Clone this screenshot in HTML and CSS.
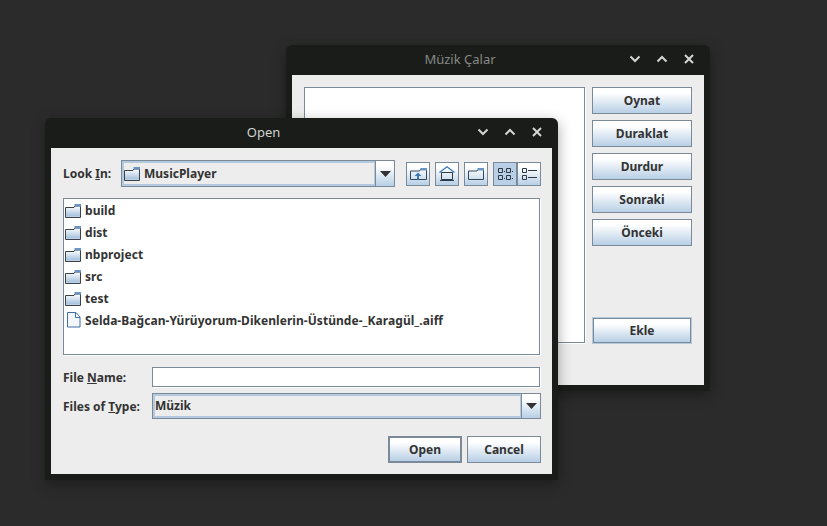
FILE: index.html
```html
<!DOCTYPE html>
<html lang="en">
<head>
    <meta charset="UTF-8">
    <meta name="viewport" content="width=device-width, initial-scale=1.0">
    <title>Müzik Çalar</title>
    <link rel="stylesheet" href="styles.css">
</head>
<body>

    <svg class="defs" width="0" height="0">
        <defs>
            <linearGradient id="folderFill" x1="0" y1="0" x2="0" y2="1">
                <stop offset="0" stop-color="#ffffff"/>
                <stop offset="0.85" stop-color="#a9c4df"/>
                <stop offset="1" stop-color="#d5e2ef"/>
            </linearGradient>
        </defs>
        <symbol id="folder" viewBox="0 0 16 14">
            <path d="M.5 13.500v-10h8.500l1-1.500h5.500v11.500z" fill="url(#folderFill)" stroke="#3c4248"/>
            <path d="M9.500 0h6.500v2.500h-6.500z" fill="#6a94c4"/>
        </symbol>
        <symbol id="caret" viewBox="0 0 11 6">
            <path d="M0 0h11L5.500 6z" fill="#333"/>
        </symbol>
        <symbol id="chevDown" viewBox="0 0 12 8">
            <path d="M1.500 1.500 6 6l4.500-4.500" fill="none" stroke="#d4d6d3" stroke-width="2"/>
        </symbol>
        <symbol id="chevUp" viewBox="0 0 12 8">
            <path d="M1.500 6.500 6 2l4.500 4.500" fill="none" stroke="#d4d6d3" stroke-width="2"/>
        </symbol>
        <symbol id="cross" viewBox="0 0 10 10">
            <path d="M1 1l8 8M9 1l-8 8" fill="none" stroke="#d4d6d3" stroke-width="2"/>
        </symbol>
    </svg>

    <div class="window music">
        <div class="titlebar">
            <span class="title dim">Müzik Çalar</span>
            <div class="controls">
                <svg width="12" height="8"><use href="#chevDown"/></svg>
                <svg width="12" height="8"><use href="#chevUp"/></svg>
                <svg width="10" height="10"><use href="#cross"/></svg>
            </div>
        </div>
        <div class="music-body">
            <div class="playlist"></div>
            <div class="side-buttons">
                <button class="btn">Oynat</button>
                <button class="btn">Duraklat</button>
                <button class="btn">Durdur</button>
                <button class="btn">Sonraki</button>
                <button class="btn">Önceki</button>
                <button class="btn add">Ekle</button>
            </div>
        </div>
    </div>

    <div class="window open">
        <div class="titlebar">
            <span class="title">Open</span>
            <div class="controls">
                <svg width="12" height="8"><use href="#chevDown"/></svg>
                <svg width="12" height="8"><use href="#chevUp"/></svg>
                <svg width="10" height="10"><use href="#cross"/></svg>
            </div>
        </div>
        <div class="open-body">
            <div class="lookin-row">
                <label class="lookin-label">Look <u>I</u>n:</label>
                <div class="combo lookin-combo">
                    <div class="combo-value">
                        <svg width="16" height="14"><use href="#folder"/></svg>
                        <span>MusicPlayer</span>
                    </div>
                    <div class="combo-arrow"><svg width="11" height="6"><use href="#caret"/></svg></div>
                </div>
                <div class="tools">
                    <button class="tool">
                        <svg width="17" height="12" viewBox="0 0 17 12">
                            <path d="M.5 11.500v-8.500h9l1-1.500h6v10z" fill="none" stroke="#34465a"/>
                            <path d="M10.500 0h6.500v2.500h-6.500z" fill="#6a94c4"/>
                            <path d="M8 4.500 4.500 8H7v3.500h2V8h2.500z" fill="#3f78b5"/>
                        </svg>
                    </button>
                    <button class="tool">
                        <svg width="16" height="15" viewBox="0 0 16 15">
                            <path d="M.5 6.500 8 .8l7.500 5.700" fill="none" stroke="#3f78b5" stroke-width="1.300"/>
                            <path d="M2.500 6.500h11v7h-11z" fill="none" stroke="#2c3a48"/>
                            <path d="M1 14.500h14" stroke="#2c3a48"/>
                        </svg>
                    </button>
                    <button class="tool">
                        <svg width="16" height="12" viewBox="0 0 16 12">
                            <path d="M.5 11.500v-8.500h8.500l1-1.500h5.500v10z" fill="none" stroke="#34465a"/>
                            <path d="M9.500 0h6.500v2.500h-6.500z" fill="#6a94c4"/>
                        </svg>
                    </button>
                    <div class="tool-pair">
                        <button class="tool active">
                            <svg width="15" height="12" viewBox="0 0 15 12">
                                <path d="M.5.500h4v4h-4zM8.500.500h4v4h-4zM.5 7.500h4v4h-4zM8.500 7.500h4v4h-4z" fill="none" stroke="#2c3a48"/>
                                <path d="M6 3h1v1H6zM14 3h1v1h-1zM6 10h1v1H6zM14 10h1v1h-1z" fill="#2c3a48"/>
                            </svg>
                        </button>
                        <button class="tool">
                            <svg width="15" height="12" viewBox="0 0 15 12">
                                <path d="M.5.500h4v4h-4zM.5 7.500h4v4h-4z" fill="none" stroke="#2c3a48"/>
                                <path d="M6 2.500h9M6 9.500h9" stroke="#2c3a48"/>
                            </svg>
                        </button>
                    </div>
                </div>
            </div>

            <div class="file-list">
                <div class="file-row"><svg class="folder-icon" width="16" height="14"><use href="#folder"/></svg><span>build</span></div>
                <div class="file-row"><svg class="folder-icon" width="16" height="14"><use href="#folder"/></svg><span>dist</span></div>
                <div class="file-row"><svg class="folder-icon" width="16" height="14"><use href="#folder"/></svg><span>nbproject</span></div>
                <div class="file-row"><svg class="folder-icon" width="16" height="14"><use href="#folder"/></svg><span>src</span></div>
                <div class="file-row"><svg class="folder-icon" width="16" height="14"><use href="#folder"/></svg><span>test</span></div>
                <div class="file-row">
                    <svg width="16" height="16" viewBox="0 0 16 16">
                        <path d="M2.500.500h8.500l4 4.500v10h-12.500z" fill="#f3f7fb" stroke="#3f6fa5"/>
                        <path d="M10.500.500v5h4.500" fill="none" stroke="#3f6fa5"/>
                    </svg>
                    <span>Selda-Bağcan-Yürüyorum-Dikenlerin-Üstünde-_Karagül_.aiff</span>
                </div>
            </div>

            <div class="name-row">
                <label class="field-label">File <u>N</u>ame:</label>
                <input type="text" class="name-input">
            </div>
            <div class="type-row">
                <label class="field-label">Files of <u>T</u>ype:</label>
                <div class="combo type-combo">
                    <div class="combo-value"><span>Müzik</span></div>
                    <div class="combo-arrow"><svg width="11" height="6"><use href="#caret"/></svg></div>
                </div>
            </div>

            <div class="dialog-buttons">
                <button class="btn default">Open</button>
                <button class="btn">Cancel</button>
            </div>
        </div>
    </div>

</body>
</html>
```

FILE: styles.css
```css
* {
    box-sizing: border-box;
}
html, body {
    margin: 0;
    height: 100%;
}
body {
    position: relative;
    overflow: hidden;
    background-color: #2b2b2b;
    font-family: "Noto Sans", sans-serif;
    font-size: 12px;
    font-weight: 700;
    color: #333;
}
.defs {
    position: absolute;
}

/* windows */
.window {
    position: absolute;
    display: flex;
    flex-direction: column;
    background-color: #1a1c19;
    border-radius: 6px 6px 0 0;
    padding: 0 6px 6px;
    box-shadow: 0 4px 14px rgba(0, 0, 0, 0.35);
}
.music {
    left: 286px;
    top: 45px;
    width: 424px;
    height: 346px;
}
.open {
    left: 45px;
    top: 118px;
    width: 513px;
    height: 362px;
}
.titlebar {
    position: relative;
    flex: none;
    height: 30px;
    padding: 0 76px 2px 0;
    display: flex;
    align-items: center;
    justify-content: center;
}
.title {
    font-size: 13px;
    font-weight: 400;
    color: #d0d3cf;
}
.title.dim {
    color: #868886;
}
.controls {
    position: absolute;
    right: 10px;
    top: 0;
    height: 28px;
    display: flex;
    align-items: center;
    gap: 15px;
}
.controls svg:last-child {
    margin-left: 1px;
}

/* buttons */
.btn {
    height: 27px;
    padding: 0;
    border: 1px solid #7a8a99;
    background: linear-gradient(#ffffff 20%, #b8cfe5);
    font: inherit;
    color: #333;
}
.btn.default {
    border-width: 2px;
}
.btn.add {
    border: 2px solid #7a8a99;
    outline: 1px solid #b4c8de;
    outline-offset: -1px;
    margin-top: auto;
}

/* music window */
.music-body {
    flex: 1;
    display: flex;
    gap: 7px;
    padding: 12px 12px 41px;
    background-color: #ededed;
}
.playlist {
    flex: 1;
    height: 256px;
    background-color: #fff;
    border: 1px solid #7a8a99;
    box-shadow: 1px 1px 0 #fff;
}
.side-buttons {
    flex: none;
    width: 100px;
    display: flex;
    flex-direction: column;
    gap: 6px;
}

/* open dialog */
.open-body {
    flex: 1;
    display: flex;
    flex-direction: column;
    padding: 12px 11px 11px 12px;
    background-color: #ededed;
}
.lookin-row {
    display: flex;
    align-items: center;
    height: 27px;
}
.lookin-label {
    width: 58px;
}
.combo {
    display: flex;
    height: 100%;
    border: 1px solid #7a8a99;
    background-color: #ededed;
}
.lookin-combo {
    width: 274px;
}
.combo-value {
    flex: 1;
    display: flex;
    align-items: center;
    gap: 4px;
    padding-left: 0;
    border: 2px solid #b4c8de;
    border-right-width: 1px;
}
.combo-arrow {
    flex: none;
    width: 19px;
    display: flex;
    align-items: center;
    justify-content: center;
    border-left: 1px solid #7a8a99;
    background: linear-gradient(#ffffff 20%, #b8cfe5);
}
.tools {
    display: flex;
    gap: 5px;
    margin-left: 11px;
}
.tool {
    width: 24px;
    height: 24px;
    padding: 0;
    display: flex;
    align-items: center;
    justify-content: center;
    border: 1px solid #7a8a99;
    background: linear-gradient(#ffffff 20%, #b8cfe5);
}
.tool.active {
    background: #b8cfe5;
}
.tool-pair {
    display: flex;
}
.file-list {
    height: 157px;
    margin: 11px 1px 0 0;
    background-color: #fff;
    border: 1px solid #7a8a99;
    box-shadow: 1px 1px 0 #fff;
}
.file-row {
    display: flex;
    align-items: center;
    gap: 4px;
    height: 22px;
    padding-left: 1px;
    letter-spacing: 0.05px;
}
.file-row svg {
    flex: none;
}
.folder-icon {
    margin-top: 2px;
}
.name-row {
    display: flex;
    align-items: center;
    height: 20px;
    margin: 12px 1px 0 0;
}
.field-label {
    width: 89px;
    flex: none;
}
.name-input {
    flex: 1;
    height: 20px;
    padding: 0;
    background-color: #fff;
    border: 1px solid #7a8a99;
    box-shadow: 1px 1px 0 #fff;
}
.type-row {
    display: flex;
    align-items: center;
    height: 26px;
    margin-top: 6px;
}
.type-combo {
    flex: 1;
}
.type-combo .combo-value {
    padding-bottom: 2px;
}
.dialog-buttons {
    display: flex;
    justify-content: flex-end;
    gap: 5px;
    margin-top: 17px;
}
.dialog-buttons .btn {
    width: 74px;
}
```
